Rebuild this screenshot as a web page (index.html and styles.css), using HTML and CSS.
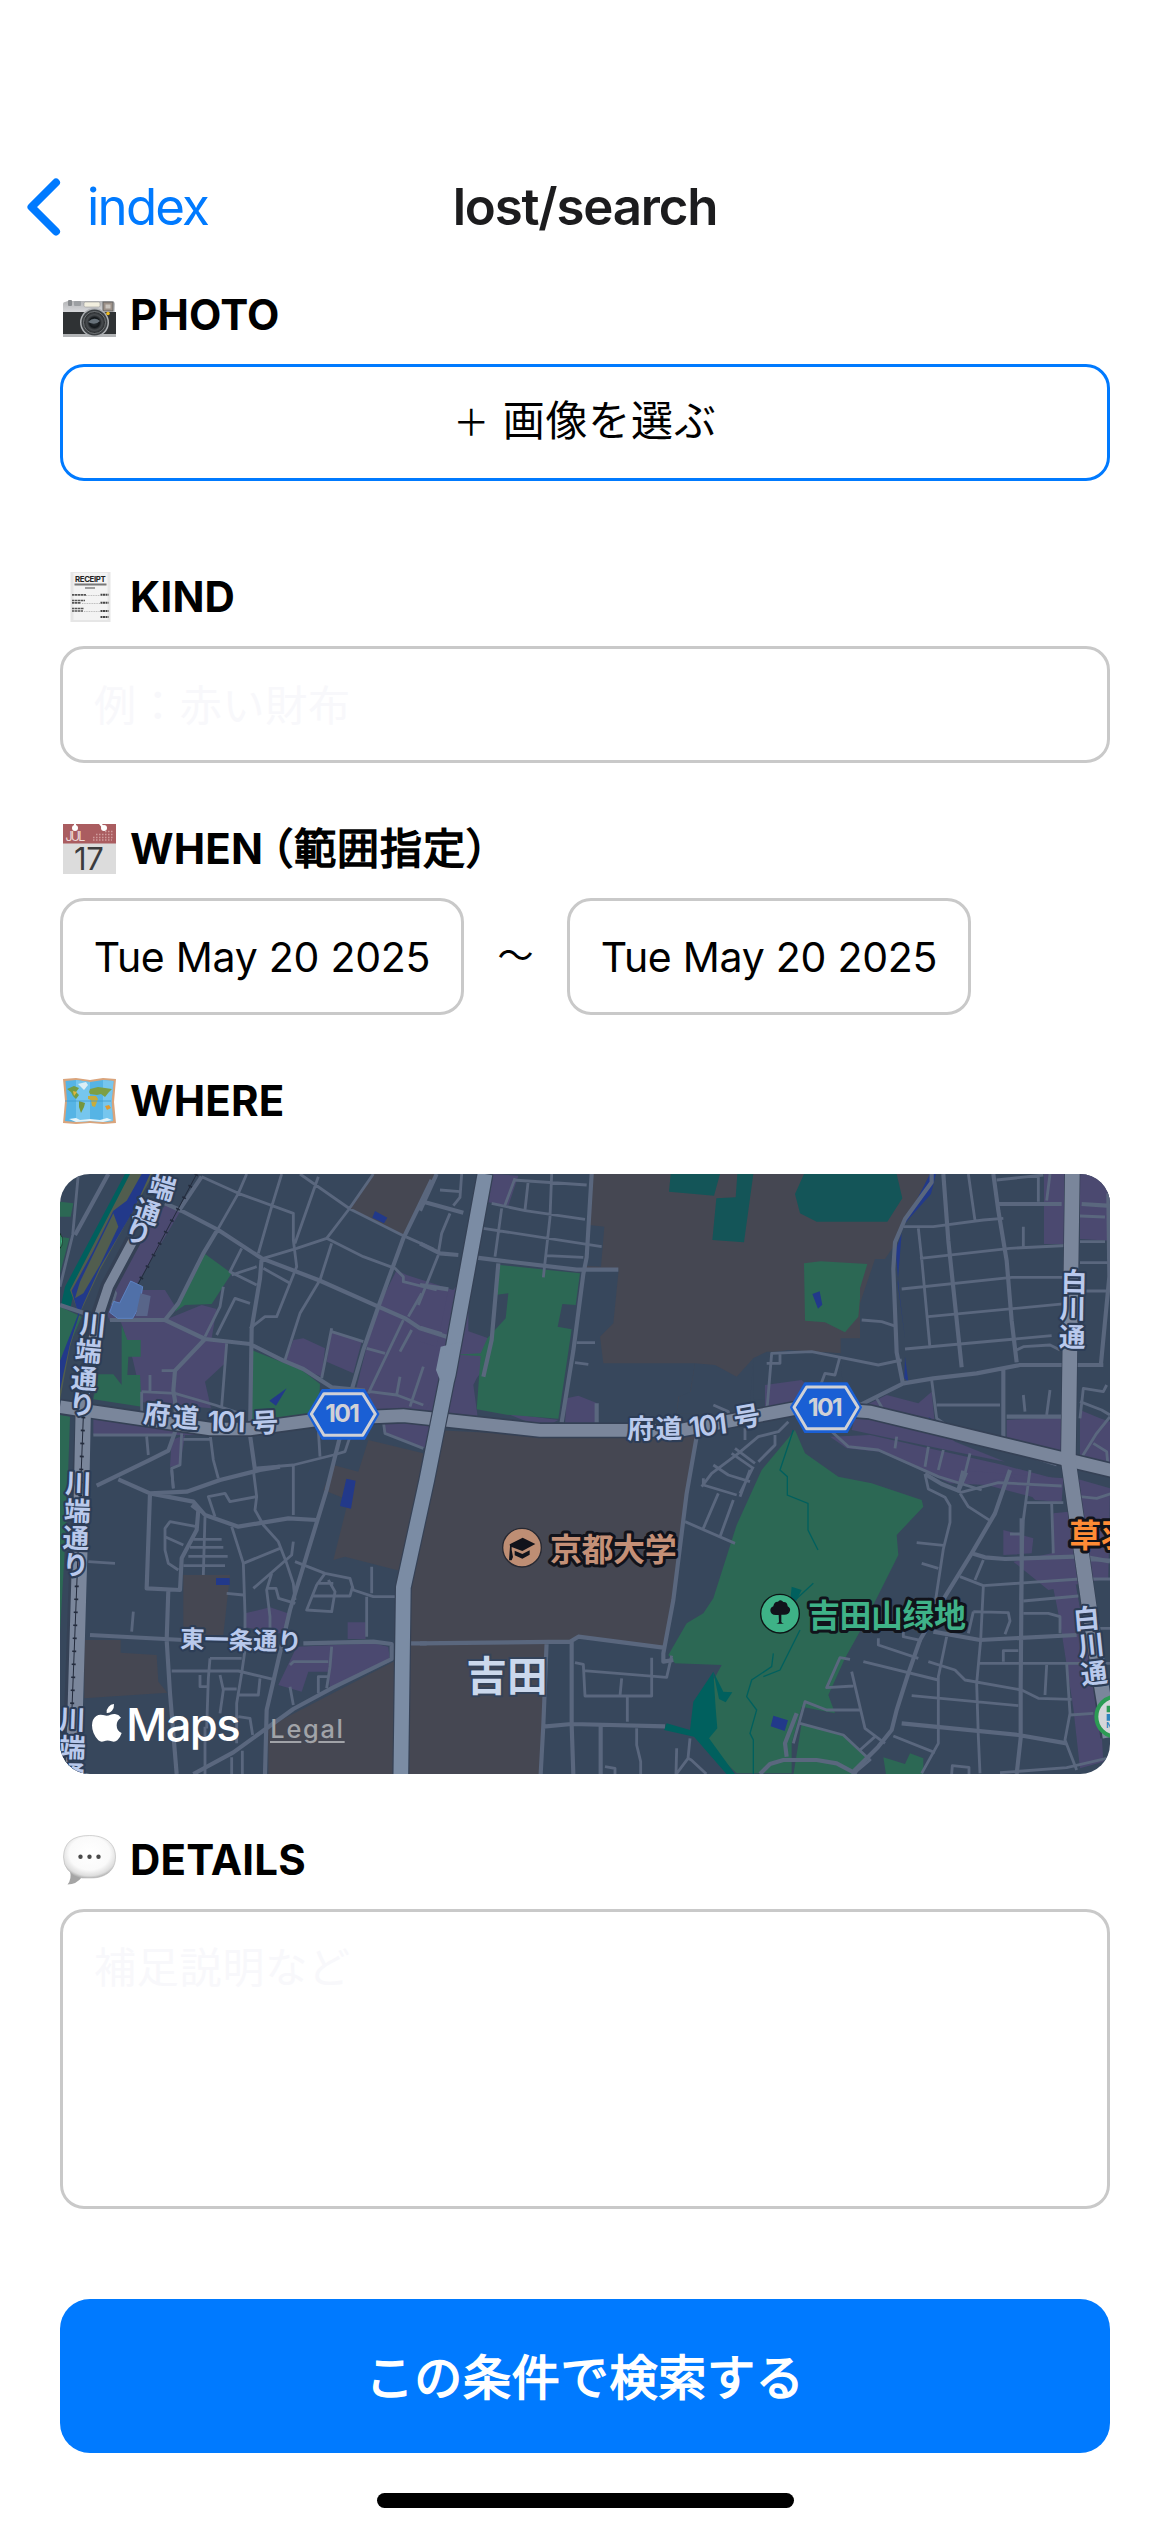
FILE: index.html
```html
<!DOCTYPE html>
<html lang="ja">
<head>
<meta charset="utf-8">
<title>lost/search</title>
<link rel="stylesheet" href="styles.css">
</head>
<body>
<div class="screen">
  <header class="nav">
    <a class="back">
      <svg class="chevron" viewBox="0 0 35 58"><path d="M30 4.500 5.500 29l24.500 24.500" fill="none" stroke="#007aff" stroke-width="8" stroke-linecap="round" stroke-linejoin="round"/></svg>
      <span class="back-text">index</span>
    </a>
    <h1 class="title">lost/search</h1>
    <span></span>
  </header>

  <main class="form">
    <section class="group group-photo">
      <h2 class="label">
        <svg class="emoji" viewBox="0 0 56 50">
          <defs>
            <linearGradient id="silver" x1="0" y1="0" x2="0" y2="1"><stop offset="0" stop-color="#b5b6b8"/><stop offset="1" stop-color="#dcdde0"/></linearGradient>
            <radialGradient id="lens"><stop offset="0" stop-color="#32383d"/><stop offset=".45" stop-color="#14181b"/><stop offset=".7" stop-color="#4a4e51"/><stop offset="1" stop-color="#222527"/></radialGradient>
          </defs>
          <path d="M3 14q0-2 2-2l3-1h42q5 0 5 3v10H3z" fill="url(#silver)"/>
          <rect x="8" y="10" width="4" height="6" rx="1" fill="#888b8e"/><rect x="14" y="11" width="7" height="5" rx="1" fill="#9da0a3"/>
          <rect x="24" y="12" width="16" height="5" rx="1.500" fill="#f2efdf" stroke="#999" stroke-width=".6"/>
          <rect x="43" y="12" width="10" height="9" fill="#9c9188" stroke="#666" stroke-width="1"/><rect x="45.500" y="14.500" width="5" height="4" fill="#c9c4bd"/>
          <path d="M3 22h53v24H3z" fill="#2f3234"/><path d="M3 44h53v3H3z" fill="#b2b4b6"/>
          <circle cx="34.500" cy="32.500" r="14.500" fill="#aeb1b4"/><circle cx="34.500" cy="32.500" r="13" fill="#3c4043"/><circle cx="34.500" cy="32.500" r="11" fill="url(#lens)" stroke="#85898c" stroke-width=".8"/>
          <path d="M28 32q6-6 12-1-5 5-12 1z" fill="#68727a"/><circle cx="48" cy="23.500" r="1.800" fill="#f0bd22"/>
        </svg>
        <span>PHOTO</span>
      </h2>
      <button class="box picker"><span><span class="plus">＋</span> 画像を選ぶ</span></button>
    </section>

    <section class="group group-kind">
      <h2 class="label">
        <svg class="emoji" viewBox="0 0 56 50">
          <rect x="10.500" y="0" width="40" height="50" fill="#e6e6e6"/><rect x="13.500" y="1" width="34" height="47" fill="#f3f3f3"/>
          <text x="30.500" y="9.500" font-size="7.800" font-weight="700" text-anchor="middle" textLength="31" fill="#222">RECEIPT</text>
          <path d="M14.500 12.500h32" stroke="#777" stroke-width="2.200"/><path d="M25 16h10" stroke="#666" stroke-width="1.200"/>
          <path d="M12 22.800h14M12 28.500h13M12 30.800h9M12 36.500h12M12 39h11" stroke="#555" stroke-width="1.700" stroke-dasharray="2.500 .5"/>
          <path d="M26 23.500h14M22 31.500h18M24 39.500h16" stroke="#aaa" stroke-width=".8" stroke-dasharray="1 .7"/>
          <path d="M40.500 22.800h8M40.500 30.800h8M40.500 39h8M40.500 45h8" stroke="#444" stroke-width="2" stroke-dasharray="2 .5"/>
        </svg>
        <span>KIND</span>
      </h2>
      <div class="box field"><span class="placeholder">例<span class="colon">：</span>赤い財布</span></div>
    </section>

    <section class="group group-when">
      <h2 class="label">
        <svg class="emoji" viewBox="0 0 56 50">
          <path d="M3 0h53v50H3z" fill="#dcdcdc"/><path d="M3 0h53v19.500H3z" fill="#aa5d60"/>
          <circle cx="15" cy="4" r="3" fill="#fff"/><path d="M14 0h2v3h-2zM39 0h3l3 4-2 1z" fill="#fff"/><circle cx="44" cy="4" r="3" fill="#fff"/>
          <text x="5.500" y="16.800" font-size="12.500" font-weight="400" textLength="20" fill="#eed9d9">JUL</text>
          <path d="M33 13.500h21M36 10.500h18M45 7.500h9M33 16h19" stroke="#cf9b9c" stroke-width="1.500" stroke-dasharray="1.500 1.500"/>
          <text x="29" y="46" font-size="31" font-weight="400" text-anchor="middle" textLength="30" fill="#3b3b3d">17</text>
        </svg>
        <span>WHEN<span class="label-ja"><span class="paren">（</span>範囲指定）</span></span>
      </h2>
      <div class="dates">
        <div class="box date"><span>Tue May 20 2025</span></div>
        <span class="tilde">〜</span>
        <div class="box date"><span>Tue May 20 2025</span></div>
      </div>
    </section>

    <section class="group group-where">
      <h2 class="label">
        <svg class="emoji" viewBox="0 0 56 50">
          <path d="M3 3l13-1 14 2 13-2 13 1-2 23 2 21-13 1-13-1-14 1-13-1 2-22z" fill="#d9a47c"/>
          <path d="M5.500 5l10.500-1 14 2 13-2 10.500 1-2 21 1.500 19-10 1-13-1-14 1-11-1 2-20z" fill="#56b4e5"/>
          <path d="M16 4l14 2v39l-14 1zM43 4l10.500 1-2 21 1.500 19-10 1z" fill="#76c6ee"/>
          <path d="M7 13l7-3 5 2-3 4 3 3-3 4-3-3-2-4z" fill="#739d45"/><path d="M18 8l8-2 2 3-4 5z" fill="#dceef5"/>
          <path d="M19 25l6 2-1 4-3 6-2-6z" fill="#75963c"/><path d="M30 13l8-2 14 2-3 3-4 5-4-3-4 1-7-1-1-2z" fill="#7d9f45"/>
          <path d="M28 20l8 0 2 3-3 8-3-1-1-6-3-1z" fill="#c8ac3c"/><path d="M13 15l4 1-3 4z" fill="#e0b53c"/><path d="M45 30l4-1 2 3-4 2z" fill="#e09a31"/>
          <path d="M9 43l7-1 4 2 10-1 10 1 7-2 5 2-9 2-13-1-14 1z" fill="#e6f5fb"/><path d="M5 25h46" stroke="#3f9acb" stroke-width=".8"/>
        </svg>
        <span>WHERE</span>
      </h2>
      <div class="map">
        <svg class="map-canvas" viewBox="30 42 3150 1800">
          <rect x="30" y="42" width="3150" height="1800" fill="#37475c"/>

          <!-- land use: campus -->
          <g fill="#454752">
            <path d="M970 42H1160L1060 225 900 145zM955 840l165 40-60 355-175-45-35 10 45-180-75-30 30-75 75 20z"/>
            <path d="M1625 42H2640L2530 260 2505 297 2475 297 2430 430V535H2372V580L2215 570 2150 580 2110 595 2090 760 1880 760 1885 710 1920 700 1935 610 1660 610 1650 530 1690 490 1706 330 1600 330 1615 190z"/>
            <path d="M1150 810l360 18H1940L1845 1465 1585 1430 1560 1445H1490L1475 1842H655V1700L1040 1500 1070 1440V1240z"/>
            <path d="M103 1440H212V1478L320 1485 325 1565 352 1598 103 1615zM400 1245H540L520 1425H400z"/>
          </g>
          <path fill="#37475c" d="M1935 610l60 5 65 35 50-55-12 165H1880l7-50 35-15zM1618 195l45 5-10 120-45-2zM2110 595l40-20 130 0 90 5 10 120-270 20z"/>

          <!-- land use: commercial -->
          <g fill="#4b4970">
            <path d="M350 130l40 25-140 235h95l28 45-28 45 110-45 45 12-15 88 45 10-5 65-60 55 18 80-205-18-30-130-35-110-35-5-25-80zM130 775l470 50H130zM1040 330l30 15 140 45 45-60v445l-350-35 45-180 35-120zM730 540l30-5 65 30-10 85-110-45zM845 515l90 30-25 95-80-35zM1000 785l140 5v80l-140-55zM365 840l40-15-15 90-30 5z"/>
            <path d="M1330 42l75 5-30 90-60-10zM1110 370l85 20-35 170-50-15zM1245 510l70 25 10 60-45 60-10 20 15 110-165-20zM1550 715l35-8 55 22v60h-95zM1480 805l-110-45 155 20zM2145 675l110-15 50 50-70 40-90 15z"/>
            <path d="M2982 42h82v210h-82zM3090 42h90v200l-90-5zM2420 750l90-45 95 25 40-35 10 100 60 50 150 60-150-30-310-65zM2340 830l120-5 400 90 170 45-10 70-210-55-110-5-210-95-100-10zM2870 780l170-10v140l-170-45zM3090 750l60 25 30 10v140l-90-20z"/>
            <path d="M585 1360l75-18 60 20-20 60-115-20zM740 1460l230-10 45 10 5 45-180 80-5-50-60 0-20 60-70-20zM893 1387h54v50h-54zM2860 1110l90 25-5 45-85 5zM2890 1205l115-25 5-120 45-5 20-100 105 30-5 270-180 35zM3005 1260h70l80 460 5 85-70 20-20-180-40-260zM2720 930l320 25-5 70-80-5-65-70-120 20z"/>
          </g>

          <!-- parks -->
          <g fill="#2c6854">
            <path d="M462 280l83 60-60 92-80 3-30 20zM605 570l150 60 55 42-5 88-200 30zM215 495l17 45h40v50h-37l-3 55h38l5 95-145-22 15-75h45l25 32zM30 125l40 5-8 40H30zM30 230l28 5-28 105zM30 440l65 30-55 130H30zM30 765l30 5-10 300-20 350-20 300H30z"/>
            <path d="M1350 315l240 25-13 95-40-3-14 68 42 8-40 268-155-12-90-16 12-160-75-4 75-4 20-45 55-60 8-75-40 5z"/>
            <path d="M2262 310l50-6 140 8-22 73v30l-5 55-40 47-60-30-60-5z"/>
            <path d="M2235 810l-100 120-75 165-70 220-30 45-50 30-55 95 20 25 140 5-60 110-5 110 110 105h165v-90l30-110 100 20-20-55 50-110 50-90 110-220-5-60 80-85-5-20-150-50-100-20-100-70z"/>
            <path d="M2255 1690l130 35 75 70-55 50H2230zM2500 1792l65 20 15-32 40 15v48h-112z"/>
          </g>

          <!-- sports grounds and woods -->
          <g fill="#145558"><path d="M1862 42h148l-18 65-135-12zM2062 42h48l-28 205-95-7 12-125 58-3zM2262 42h278l17 73-45 70h-212l-50-25-15-58z"/></g>
          <g fill="#00605e">
            <path d="M225 42h18L75 380l-15 70-28-10 13-60zM1990 1535l-60 90-10 85-70-20-8 20 90 20 100 115h25l-80-110 25-30-5-60zM1990 1535l30 60 27 2-20 30-20-10zM2225 1280l30 10-20 40-15 0z"/>
            <path d="M2230 810l-20 60-20 60 22 20v55l62 25v80l30 60M2290 1270l-65 60M2170 1480l-5 40-60 40-15 50 30 40-20 70 10 20v110M2250 1410l-60 120-50 20" fill="none" stroke="#00605e" stroke-width="4"/>
          </g>

          <!-- river -->
          <path fill="#515d4e" d="M240 42h70L150 330 90 460 60 560 30 720V600l60-130-30-80z"/>
          <path fill="#22398a" d="M275 42h25l-50 110-100 170-50 110-15 40-25 80-20 90-10 50v-90l55-140-20-70 65-120 60-120 40-30z"/>
          <path fill="#515d4e" d="M190 160l15 40-55 115-50 85-25 15 15-50z"/>
          <g fill="#22398a"><path d="M975 153l37 20-10 17-35-17zM710 685l-32 52-20-15zM889 956l28 6-14 84-33-8zM498 1254h41v21h-41zM2287 402l22-8 8 40-13 12z"/>
            <path d="M2170 1667l44 14-10 32-42-14zM2640 42h18l-15 60-80 90zM2555 220l-12 150 22 165-18-145-10-120zM2565 590l10 75-12-10zM2635 770l50 35 170 55-150-30-50-30z"/></g>

          <!-- side streets -->
          <g class="road road-minor">
            <path d="M85 42L68 225 30 380M590 42L565 100 505 205M455 50l110 50 165 60v80l10 80-20 50-40 100h-35l-45 35M695 42L665 140 625 280M805 50l-70 200M750 42l150 105 160 80 90 40M970 42L895 150 830 235 740 265 640 295M830 235l110 55 95 35 25 25v15l100 25M845 250l-35 110-60 100-45 140M575 265l-35 70 80 40M545 345l75-25M640 325l80 45M600 430l-45-15-55 110M520 380l-10 60-45 90M185 380l12 20-10 35M845 505l-30 150M845 515l95 30M950 565l55 15M1060 480L955 700M1115 400l-40 70M1085 510l-35 65M1120 620l-40 120M1050 650l-10 55M960 695l80 10 80 30M530 550l-15 190M335 632h45M300 645v50M275 695l100 5 120 35 75 25M275 695v60M130 825h240M290 830l5 55M400 838h80M480 820l10 80 15 55M395 820l-5 95-25 10 5 60M730 915v150M805 810l5 80M1000 785l5 35 115 45M610 925l120-10 120-30 35-10 15-45"/>
            <path d="M1235 42l-5 70-20 25M1170 90l60 5M1200 160l-25 60-10 60M1395 55l-30 80M1435 60l-10 90M1505 42l-5 130-20 180M1390 60l220 15M1355 145l-20 145M1325 130l100 22 180 26M1300 205l355 55M1490 287l110 5M1580 548h55M1575 608l40 5M1165 285l-60 150M1990 735l45 20 10 50M2150 760l15-180 120-5 200 40 70-15M2150 610h40v-30M2085 805v35M2215 785l-30 30-60 15-60 50-80 60-30 40M2175 825v30l-50 50M2045 880l65 45M2055 865l60 45M1990 915l45 30 65 20M1960 955v20l100 30M2005 1000l-45 105M2110 920l-40 80M2100 930l-30 80M2050 1020l-40 110M1905 1085l150 65"/>
            <path d="M2560 200h90l150-20 60-5M2605 205l10 90 25 270M2610 295l270-30 200-10M2635 470l420-40M2555 387l330-35h160M2565 567l330-30 110-10M2755 42l20 140M2840 60l140-15M2965 50v75M3000 42l-10 80M2920 200v60M2900 570l20-10 80-5 30 15M2645 660l15 115 50 35 150 55 160 50M2660 735h190M2920 705l5 50M3000 690l-10 75M3090 168l75 3M3090 245h75M3090 308h90M3100 393h75M2435 480l60 5 45 15M3090 725l65 25 25 15M3090 775l10-90 60 10 10-20M3090 905l90 15M3090 900l50-80 40-50M3130 850l40 25 5 50M2480 715l20 35M2370 590l-15 55-30-5-15 40M2340 810l55 50 90 10 180 80 130 40M2540 830l-5 35M2635 860l-10 60M2680 870l-15 60M2760 880l-20 80"/>
          </g>
          <g class="road road-minor">
            <path d="M365 930l5 55M610 930l10 80-80 15-15-25-50 10 20 60M620 1010l-5 40 25 45 45 50 25 65 20 60 5 50M730 1145l-5 40-115 100M690 1165l-110 45M440 1100l-80-15-15 20v65l10 40 30 20M345 1130l55 25M465 1070l-5 175M430 1138h85M420 1162h100M415 1189h118M400 1217h125M545 1100l35 110 5 150v110l-10 70-15 90v120M530 1300l50 5M665 1240l-15 50 10 80v35M650 1285h28l8 30 50 15M735 1205l90 35 75 15 10 35 60 20h65M825 1240l-25 35-30 75 75 5 10-60-20-35M790 1308h110l8-30M800 1270h50M950 1310v120M965 1220v80M115 1205l80 5M250 1355l-5 60M365 1533h200l105 25M480 1495h95M480 1495l-5 60-5 150M450 1545v35h25M510 1545l10 45-10 70M520 1587h40M560 1605h65l5-50M565 1670l35 5 8 50M465 1842V1700M545 1842v-50M577 1842v-70M720 1580l10 55M720 1515l10-10h105M845 1460l-5 60-10 65M805 1600v-50h30"/>
            <path d="M1575 1508l25 5 5 95h200v-115M1600 1532l250 20 15-65M1715 1555l-5 53M1732 1610v75M1760 1705v50l12 50v37M1665 1820l30 5v17M1880 1765l-2 77M1920 1735l-6 60-35 47M1914 1795l10 5 45 42"/>
            <path d="M2625 942l10 45 50 25 15 25v50l-20 80-25 165M2600 1148l80 8M2615 1210l50 15M2725 998l25-60M2730 1000l25 40 70 45M2730 998l115-30 190 10M2930 1028h110M2940 930l-20 150-5 150-3 90M3005 1030l5 150M2880 1122h35M2800 1200l-25 60M2730 1250l70 27 290-20M2800 1280l-8 160-12 130 5 160 5 110M2770 1355l-15 65M2770 1355l105 3 5 25-15 40M2920 1323l165-15M2920 1360h75l35 10v50M2560 1410v20l55 12M2690 1430l-25 120v200l-50 90M2485 1435v20l120 40M2440 1505l225 55M2635 1505l80 25 30 30 170 30 50 25 100 3M2860 1505v-33h45M2785 1510h395M2990 1515l-5 90M3050 1510l10 150-15 80 35 90M3060 1665l70-5M2585 1607l320 30M2530 1728l125 50M2400 1498l-30-5-40 90 80-5M2405 1535l40 170 60 45M2430 1770l45-40M2230 1750l35-125 65 25h105M2250 1690l130 35 80 75-60 50M3090 1010l50 5 45-15M3100 1200h80M3120 1257h60M3140 1405h40M2705 1842l2-25 50 5v20M2850 1838l200-15 130-30"/>
          </g>

          <!-- secondary streets -->
          <g class="road road-mid">
            <path d="M175 42L75 225M345 130l45 20 115 60 130 85 170 65 180 80 80 35 45 30 80 25M455 50l-70 105M505 205l-45 75-75 150-40 50H180M30 435l90 30M345 480l120 57 135 15 100 50 60 25 85 55 100 10M465 537l-90 95-5 60 5 30 5 80-25 70-60 30-155 75M635 295l-5 60-25 150-5 320 15 105M1145 60L1060 235 985 440 940 570 905 690 870 830 830 990 720 1350 650 1650 645 1842"/>
            <path d="M120 1425l280 15M205 958l95 42 130 25 35 40 100 35 60-10 90-15 85 5M300 1000l-10 285 100 5 5-95 45-85 5-60-20-15M300 1000l110-5 100-35 120-30 60-10M355 1290l-5 150 10 160 20 242M760 1450l210-5 55 7v45l-175 85-120 65-180 130-120 65M1080 1450h50"/>
            <path d="M1160 42l-50 110M1120 125l120 33M1110 250l60 30 55 5M1110 375l85 13M1110 503l65 20M1280 293l65 8 235 28h125M1345 310l-20 230-25 110M1625 42l-15 250-10 50-30 230-35 215M1640 730v60M1940 830l-30 170-40 320-30 160v25l30-5M1110 1450l450-5 25-15 255 33M1565 1445v250l5 147M1490 1445l-10 250-8 147M1480 1700l85-8 280 7M1652 1700v142"/>
            <path d="M2645 42v25l-80 110-30 70-5 80 10 250 20 100M2680 42l15 200 20 190 20 190M2830 42l15 110 25 150 15 180 15 125M2845 132h190M3095 132l75 5M3175 100l3 250-25 260M2430 735l130-65 90-15 130-15 130-25h250M2860 620v250M2870 770h170"/>
            <path d="M2880 930l-45 130-70 120-80 130-75 130-35 100-35 110-15 60-40 50-80 80M2765 1180l40 12 60 5 230-8 85 15M2650 1415l140 25 290-15M2915 1075v150l-3 360v150l-12 107M2555 1690l350 35 145 25M2130 1842l30-30 40-12h100l60 10 60 32M2210 1790l-5-40 35-90M2625 942l50 30 50 20 15-60"/>
          </g>

          <!-- arterial roads -->
          <g class="road casing"><path d="M250 240l-75 140-40 120-35 240-10 240-30 862"/><path d="M30 740l100 15 350 52h120l220-30 240-10 410 44h420l370-70 200 15 620 150 250 60"/><path d="M3067 42l-12 860 80 560 40 270"/></g>
          <g fill="none" stroke="#7a869b" stroke-width="38"><path d="M250 240l-75 140-40 120-35 240" stroke-width="28"/><path d="M100 740l-5 240-25 862" stroke-width="46"/><path d="M30 740l100 15 350 52h120l220-30 240-10 410 44h420l370-70 200 15 620 150 250 60"/><path d="M3067 42l-12 860 80 560 45 270" stroke-width="44"/></g>
          <path d="M1305 42l-110 600-5 20-60 300-70 320-8 600" fill="none" stroke="#354155" stroke-width="51"/>
          <path d="M1305 42l-110 600-5 20-60 300-70 320-8 600" fill="none" stroke="#7b8ca4" stroke-width="44" stroke-linejoin="round"/>
          <path d="M1172 560l-14 70 12 30 26 5 21-30 2-45 14-45z" fill="#7b8ca4"/>

          <!-- railway -->
          <path d="M440 42L255 390M100 770l-35 900" fill="none" stroke="#232b3c" stroke-width="3"/>
          <path d="M440 42L255 390M100 770l-35 900" fill="none" stroke="#232b3c" stroke-width="12" stroke-dasharray="5 34"/>
          <path d="M242 363l36 17-10 60-20 35h-45l-24-18 12-33 18 5z" fill="#5070a8" stroke="#5d83c4" stroke-width="3"/>
          <path d="M272 400l30 8-10 60h-35z" fill="#586589"/>

          <!-- street names -->
          <g class="street">
            <text transform="translate(337 82) rotate(16)">端</text><text transform="translate(292 155) rotate(18)">通</text><text transform="translate(265 216) rotate(18)">り</text>
            <text transform="translate(130 493) rotate(6)">川</text><text transform="translate(115 573) rotate(5)">端</text><text transform="translate(103 655) rotate(4)">通</text><text transform="translate(97 733) rotate(3)">り</text>
            <text transform="translate(85 970) rotate(2)">川</text><text transform="translate(82 1052) rotate(2)">端</text><text transform="translate(78 1133) rotate(2)">通</text><text transform="translate(77 1214) rotate(2)">り</text>
            <text transform="translate(67 1678) rotate(2)">川</text><text transform="translate(67 1762) rotate(2)">端</text><text transform="translate(66 1845) rotate(2)">通</text>
            <text transform="translate(321 761) rotate(6)">府</text><text transform="translate(407 772) rotate(4)">道</text><text class="num" transform="translate(527 785) rotate(2)">101</text><text transform="translate(645 787) rotate(-3)">号</text>
            <text transform="translate(1772 805)">府</text><text transform="translate(1857 805) rotate(-1)">道</text><text class="num" transform="translate(1971 797) rotate(-7)">101</text><text transform="translate(2091 769) rotate(-10)">号</text>
            <text transform="translate(3073 365) rotate(1)">白</text><text transform="translate(3068 445) rotate(1)">川</text><text transform="translate(3067 530) rotate(1)">通</text>
            <text transform="translate(3109 1375) rotate(-5)">白</text><text transform="translate(3124 1455) rotate(-6)">川</text><text transform="translate(3132 1539) rotate(-7)">通</text>
            <text transform="translate(573 1440) rotate(1.500)" class="small">東一条通り</text>
          </g>
          <text class="district" x="1371" y="1548">吉田</text>

          <!-- route shields -->
          <g id="shield">
            <path d="M817 690h126l42 72-42 74H817l-42-74z" fill="#1a5fd4" stroke="#1a5fd4" stroke-width="6" stroke-linejoin="round"/>
            <path d="M822 701h116l38 61-38 64H822l-38-64z" fill="none" stroke="#d0d1d6" stroke-width="9" stroke-linejoin="round"/>
            <text class="route" x="878" y="787" textLength="104">101</text>
          </g>
          <use href="#shield" x="1448" y="-20"/>

          <!-- places -->
          <circle cx="1416" cy="1163" r="58" fill="#be8e74" stroke="#272932" stroke-width="4"/>
          <path d="M1379 1153l39-20 38 19-39 21-32-12v8l4 22-4 10h-8l3-42zM1394 1172l23 10 22-11v13l-22 12-23-10z" fill="#11131b"/>
          <text class="poi campus" x="1690" y="1203" textLength="380">京都大学</text>
          <circle cx="2190" cy="1361" r="58" fill="#3eb287" stroke="#0d1516" stroke-width="4"/>
          <path d="M2186 1365h-8q-17 0-17-14 0-9 9-12 2-15 14-14 8-9 16 1 12-1 13 13 9 5 7 13-3 12-17 12h-9v22q1 3 8 5h-23q7-1 8-5z" fill="#11131b"/>
          <text class="poi park" x="2511" y="1402" textLength="474">吉田山绿地</text>
          <text class="poi temple" x="3058" y="1160">草羽</text>
          <circle cx="3199" cy="1670" r="60" fill="#d5d6da" stroke="#2c9b54" stroke-width="12"/>
          <path d="M3170 1637h20v20h-20z" fill="#2e9a54"/><path d="M3170 1662h20v20h-20z" fill="#2d83bd"/><text class="line-mark" x="3169" y="1704">N</text>
          <path d="M30 265v-45q8 10 7 25-1 15-7 20z" fill="#47c58f" stroke="#111" stroke-width="2"/>

          <!-- attribution -->
          <path d="M192 1632q1 13-6 20-7 8-16 7-1-12 6-19 6-7 16-8z" fill="#fff"/>
          <path d="M170 1667c9 0 15-6 25-5q11 1 18 11-13 8-13 23 0 17 15 23-4 13-13 22-8 7-17 3-13-5-23 0-9 4-17-3-19-20-19-45 0-19 13-28 9-6 20-3z" fill="#fff"/>
          <text class="brand" x="228" y="1743" textLength="344">Maps</text>
          <text class="legal" x="661" y="1733" textLength="218">Legal</text>
          <path d="M660 1746h94M805 1746h79" stroke="#a1a3a8" stroke-width="6"/>
        </svg>
      </div>
    </section>

    <section class="group group-details">
      <h2 class="label">
        <svg class="emoji" viewBox="0 0 56 50">
          <defs><radialGradient id="bubble" cx=".5" cy=".42" r=".6"><stop offset="0" stop-color="#fff"/><stop offset=".65" stop-color="#fafafa"/><stop offset=".88" stop-color="#dedede"/><stop offset="1" stop-color="#aaa"/></radialGradient></defs>
          <path d="M10 36q2 8-2.500 13.500 9 0 14.500-7.500z" fill="#a5a5a5"/>
          <path d="M29.500.5C46 .5 55.500 9 55.500 22S46 43 31 43h-9Q3.500 38 3.500 22 4 .5 29.500.5z" fill="url(#bubble)" stroke="#b9b9b9" stroke-width=".6"/>
          <g fill="#4a4a4a"><circle cx="20.500" cy="21.800" r="2.200"/><circle cx="29.500" cy="21.800" r="2.200"/><circle cx="38.500" cy="21.800" r="2.200"/></g>
        </svg>
        <span>DETAILS</span>
      </h2>
      <div class="box area"><span class="placeholder">補足説明など</span></div>
    </section>

    <button class="submit"><span>この条件で検索する</span></button>
  </main>
  <footer class="home"><div class="home-bar"></div></footer>
</div>
</body>
</html>
```
FILE: styles.css
```css
* { box-sizing: border-box; }

body {
  margin: 0;
  background: #fff;
  color: #000;
  font-family: Inter, "Noto Sans CJK JP", sans-serif;
}

.screen {
  display: flex;
  flex-direction: column;
  width: 1170px;
  height: 2532px;
  overflow: hidden;
}

/* Navigation bar */
.nav {
  display: grid;
  grid-template-columns: 1fr auto 1fr;
  align-items: center;
  height: 290px;
  padding: 140px 26px 17px;
  line-height: 60px;
}
.back {
  display: flex;
  align-items: center;
  gap: 26px;
  color: #007aff;
  font-size: 51px;
  letter-spacing: -1.8px;
}
.chevron { width: 35px; height: 58px; }
.title {
  margin: 0;
  color: #1c1c1e;
  font-size: 51px;
  font-weight: 600;
  letter-spacing: -1.2px;
}

/* Form */
.form {
  display: flex;
  flex-direction: column;
  padding: 0 60px;
}
.group {
  display: flex;
  flex-direction: column;
  gap: 24px;
  margin-bottom: 61px;
}
.group-photo { margin-bottom: 91px; }
.group-where { gap: 48px; }
.group-details { margin-bottom: 90px; }

.label {
  display: flex;
  align-items: center;
  gap: 14px;
  height: 50px;
  margin: 0;
  font-size: 42px;
  font-weight: 700;
  line-height: 50px;
  letter-spacing: 0.2px;
  white-space: nowrap;
}
.label-ja {
  font-weight: 400;
  letter-spacing: 0.9px;
  -webkit-text-stroke: 1.6px #000;
}
.paren { margin-left: 9px; font-feature-settings: "halt"; }
.emoji { width: 56px; height: 50px; flex: none; }

.box {
  display: flex;
  align-items: center;
  height: 117px;
  border: 3px solid #c9c9c9;
  border-radius: 24px;
  background: #fff;
  padding: 0 31px;
  font-size: 42px;
  line-height: 50px;
  letter-spacing: 0.8px;
}
.picker {
  justify-content: center;
  border-color: #007aff;
  color: #000;
  font-family: inherit;
  padding-bottom: 2px;
}
.plus { font-size: 36px; }
.placeholder { color: #f8f8fb; }
.colon { font-family: "Noto Sans CJK SC", sans-serif; }

.dates { display: flex; }
.date {
  justify-content: center;
  width: 404px;
  padding: 0;
  font-size: 41px;
  letter-spacing: -0.25px;
  white-space: nowrap;
}
.tilde {
  width: 103px;
  font-size: 36px;
  line-height: 117px;
  text-align: center;
}
.area {
  align-items: flex-start;
  height: 300px;
  padding-top: 31px;
}

.submit {
  display: flex;
  align-items: center;
  justify-content: center;
  height: 154px;
  padding: 0 0 5px;
  border: 0;
  border-radius: 30px;
  background: #007aff;
  color: #fff;
  font-family: inherit;
  font-size: 48px;
  font-weight: 400;
  letter-spacing: 0.8px;
  -webkit-text-stroke: 1.6px #fff;
}

/* Home indicator */
.home {
  display: flex;
  justify-content: center;
  padding-top: 40px;
}
.home-bar {
  width: 417px;
  height: 15px;
  border-radius: 8px;
  background: #000;
}

/* Map */
.map {
  height: 600px;
  border-radius: 30px;
  overflow: hidden;
}
.map-canvas { display: block; width: 1050px; height: 600px; }
.road { fill: none; stroke: #5a677e; stroke-linejoin: round; }
.road-minor { stroke-width: 8.500; }
.road-mid { stroke-width: 12.500; }
.casing { stroke: #354155; stroke-width: 48; }

.street text {
  fill: #b9c9ec;
  stroke: #2d3d56;
  stroke-width: 13px;
  stroke-linejoin: round;
  paint-order: stroke;
  font-size: 80px;
  font-weight: 700;
  text-anchor: middle;
  dominant-baseline: central;
}
.street .small { font-size: 73px; }
.street .num { font-size: 84px; font-weight: 600; letter-spacing: -6px; }
.district {
  fill: #cbd8ec;
  stroke: #34435a;
  stroke-width: 12px;
  paint-order: stroke;
  font-size: 122px;
  font-weight: 700;
  text-anchor: middle;
  dominant-baseline: central;
}
.route {
  fill: #d0d1d6;
  font-size: 74px;
  font-weight: 700;
  text-anchor: middle;
}
.poi {
  stroke: #11131b;
  stroke-width: 18px;
  stroke-linejoin: round;
  paint-order: stroke;
  font-size: 96px;
  font-weight: 700;
  text-anchor: middle;
}
.campus { fill: #c49077; }
.park { fill: #3fb288; font-family: "Noto Sans CJK SC", sans-serif; }
.temple { fill: #ff8b35; text-anchor: start; }
.line-mark { fill: #2d83bd; font-size: 22px; font-weight: 700; }
.brand { fill: #fff; font-size: 136px; font-weight: 500; }
.legal { fill: #a1a3a8; font-size: 76px; font-weight: 500; }
```
